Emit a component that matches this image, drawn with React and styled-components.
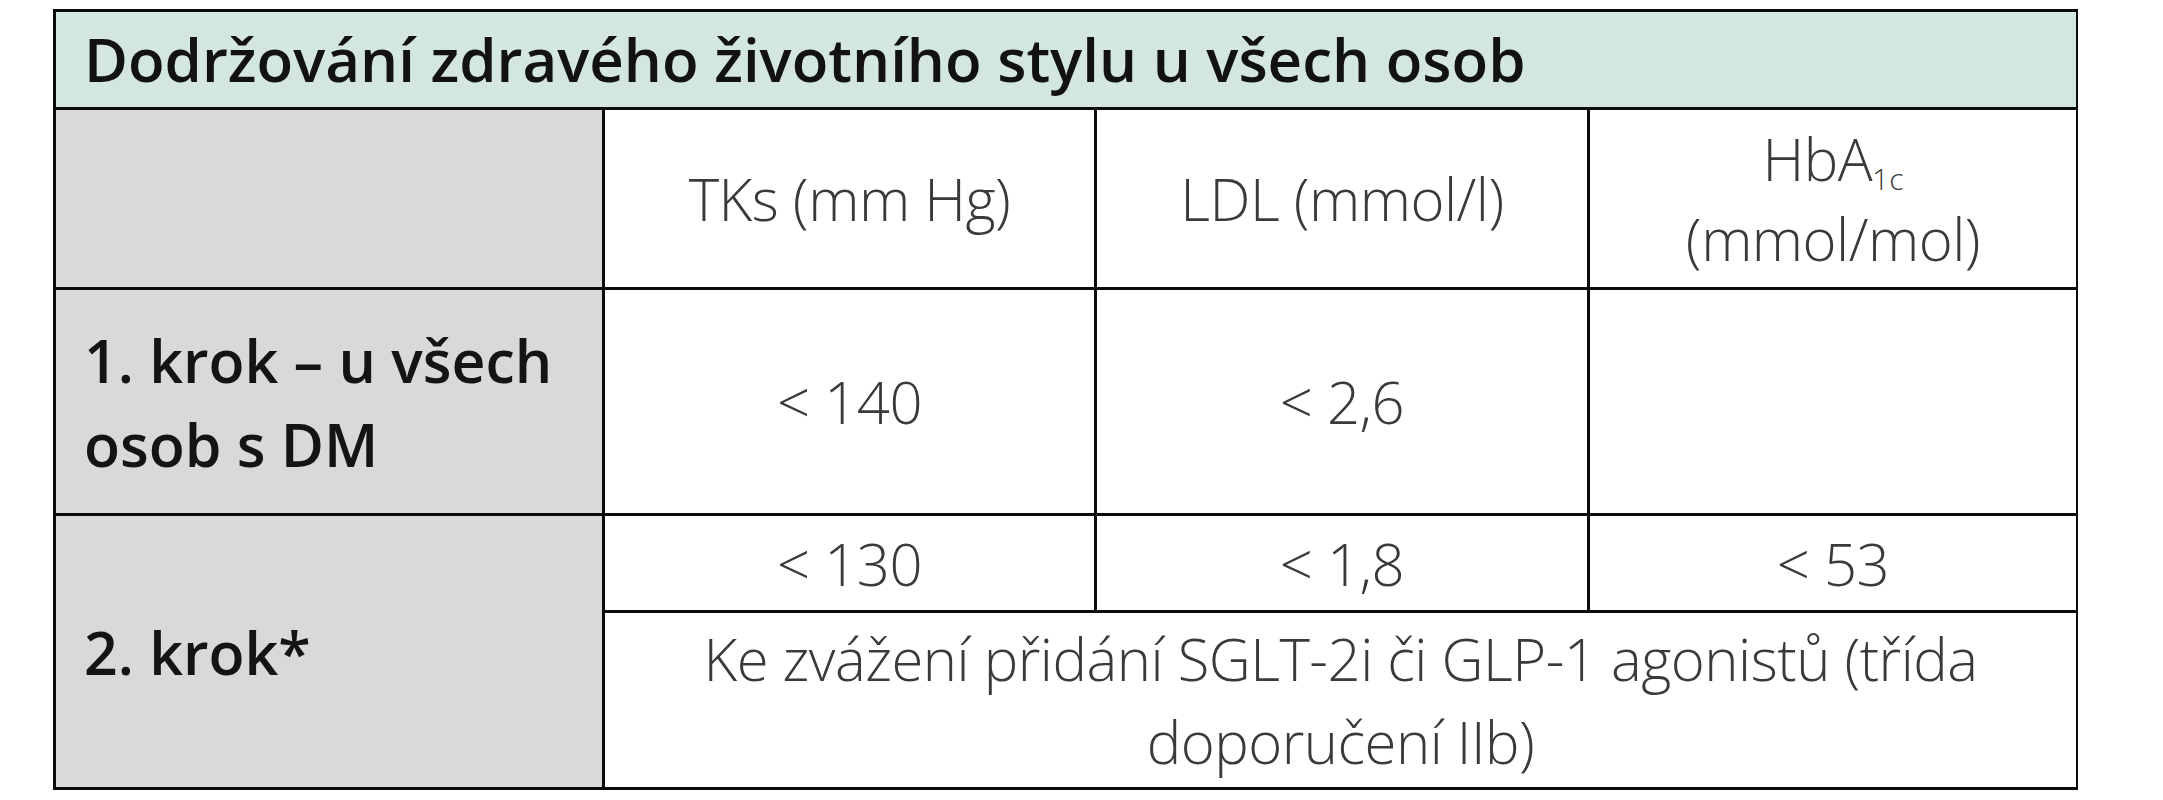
import styled, { createGlobalStyle } from 'styled-components';

const GlobalStyle = createGlobalStyle`
  html, body {
    margin: 0;
    padding: 0;
    background: #ffffff;
  }
`;

const Page = styled.div`
  width: 2163px;
  height: 800px;
  padding: 9px 0 0 53px;
  box-sizing: border-box;
`;

const Table = styled.div`
  display: grid;
  grid-template-columns: 546px 489px 490px 486px;
  grid-template-rows: 95px 177px 223px 94px 174px;
  gap: 3px;
  padding: 3px;
  width: 2025px;
  box-sizing: border-box;
  background: #0c0c0c;
`;

const Title = styled.div`
  grid-column: 1 / -1;
  display: flex;
  align-items: center;
  padding: 0 0 2px 28px;
  background: #d4e6e1;
  color: #121212;
  font-family: "Open Sans", "Liberation Sans", sans-serif;
  font-weight: 600;
  font-size: 60px;
`;

const Label = styled.div`
  display: flex;
  align-items: center;
  padding: 0 20px 0 28px;
  background: #d9d9d9;
  color: #141414;
  font-family: "Open Sans", "Liberation Sans", sans-serif;
  font-weight: 600;
  font-size: 59px;
  line-height: 84px;
  grid-row: ${p => p.$span ? `span ${p.$span}` : 'auto'};
`;

const Cell = styled.div`
  display: flex;
  align-items: center;
  justify-content: center;
  text-align: center;
  padding: 0 20px;
  background: #ffffff;
  color: #3a3a3a;
  font-family: "Open Sans", "Liberation Sans", sans-serif;
  font-weight: 300;
  font-size: 58px;
  line-height: ${p => p.$tight ? '80px' : '83px'};
  letter-spacing: -0.5px;
  grid-column: ${p => p.$wide ? '2 / -1' : 'auto'};
`;

const Sub = styled.sub`
  font-size: 30px;
  vertical-align: -9px;
  letter-spacing: 0;
  line-height: 0;
`;

export default function App() {
  return (
    <Page>
      <GlobalStyle />
      <Table>
        <Title>Dodržování zdravého životního stylu u všech osob</Title>

        <Label />
        <Cell>TKs (mm Hg)</Cell>
        <Cell>LDL (mmol/l)</Cell>
        <Cell $tight>
          <span>
            HbA<Sub>1c</Sub>
            <br />
            (mmol/mol)
          </span>
        </Cell>

        <Label>
          <span>
            1. krok – u všech
            <br />
            osob s DM
          </span>
        </Label>
        <Cell>&lt; 140</Cell>
        <Cell>&lt; 2,6</Cell>
        <Cell />

        <Label $span={2}>2. krok*</Label>
        <Cell>&lt; 130</Cell>
        <Cell>&lt; 1,8</Cell>
        <Cell>&lt; 53</Cell>
        <Cell $wide>
          <span>
            Ke zvážení přidání SGLT-2i či GLP-1 agonistů (třída
            <br />
            doporučení IIb)
          </span>
        </Cell>
      </Table>
    </Page>
  );
}
